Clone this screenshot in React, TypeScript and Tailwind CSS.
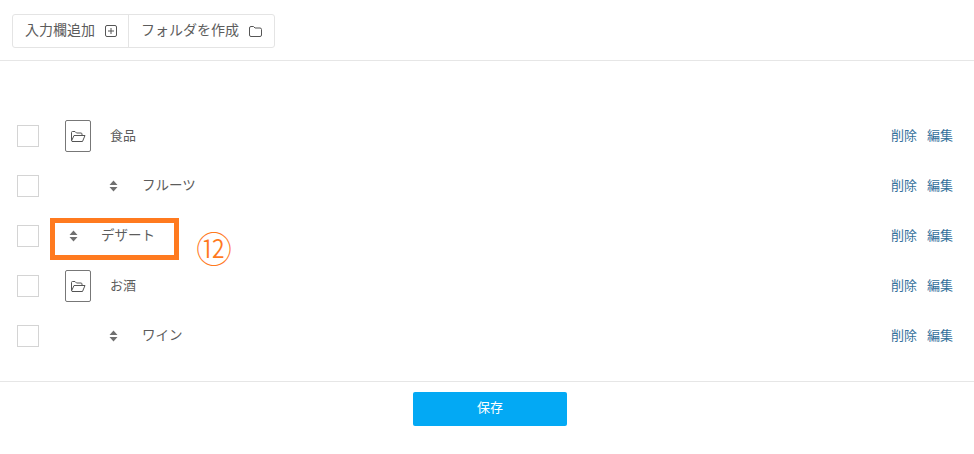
function Sort() {
  return (
    <svg width="9" height="12" viewBox="0 0 9 12" className="shrink-0">
      <path d="M4.5 0.5 L8.5 5 H0.5 Z M4.5 11.5 L8.5 7 H0.5 Z" fill="#707070" />
    </svg>
  );
}

function PlusBox() {
  return (
    <svg width="12" height="12" viewBox="0 0 12 12" fill="none" stroke="#555555" strokeWidth="1" className="shrink-0">
      <rect x="0.5" y="0.5" width="11" height="11" rx="1.5" />
      <path d="M6 3v6M3 6h6" />
    </svg>
  );
}

function Folder() {
  return (
    <svg width="13" height="11" viewBox="0 0 13 11" fill="none" stroke="#555555" strokeWidth="1" className="shrink-0">
      <path d="M0.5 2 Q0.5 0.5 2 0.5 H4.5 L6 2 H11 Q12.5 2 12.5 3.5 V9 Q12.5 10.5 11 10.5 H2 Q0.5 10.5 0.5 9 Z" />
    </svg>
  );
}

function FolderOpen() {
  return (
    <svg width="15" height="11" viewBox="0 0 15 11" fill="none" stroke="#555555" strokeWidth="1">
      <path d="M0.5 9.5 V1.5 Q0.5 0.5 1.5 0.5 H4 L5.5 2 H10 Q11 2 11 3 V4.5" />
      <path d="M0.5 10 L3 4.5 H14 L11.5 10.5 H1 Z" strokeLinejoin="round" />
    </svg>
  );
}

function Row({ children }: { children: React.ReactNode }) {
  return (
    <div className="flex h-[50px] items-center pl-[17px] pr-[21px]">
      <div className="h-[22px] w-[22px] shrink-0 border border-[#d4d4d4] bg-white" />
      <div className="flex flex-1 items-center text-[#5c5c5c]">{children}</div>
      <div className="flex gap-[10px] pb-[3px] text-[13px] text-[#33709b]">
        <span>削除</span>
        <span>編集</span>
      </div>
    </div>
  );
}

function FolderRow({ label }: { label: string }) {
  return (
    <Row>
      <div className="ml-[26px] flex h-[32px] w-[26px] items-center justify-center rounded-[2px] border border-[#777777]">
        <FolderOpen />
      </div>
      <span className="ml-[19px] pb-[3px] text-[13px]">{label}</span>
    </Row>
  );
}

function ChildRow({ label, indent }: { label: string; indent: "deep" | "shallow" }) {
  return (
    <Row>
      <div className={indent === "deep" ? "ml-[70px] flex items-center" : "ml-[30px] flex items-center"}>
        <Sort />
      </div>
      <span className={indent === "deep" ? "ml-[24px] pb-[3px] text-[13.5px]" : "ml-[23px] pb-[4px] text-[13.5px]"}>{label}</span>
    </Row>
  );
}

export default function App() {
  return (
    <div
      className="relative h-[454px] w-[974px] overflow-hidden bg-white"
      style={{ fontFamily: '"Noto Sans CJK JP", "Noto Sans", sans-serif' }}
    >
      <div className="h-[61px] border-b border-[#e6e6e6] pl-[12px] pt-[14px]">
        <div className="inline-flex h-[34px] items-center rounded-[3px] border border-[#e4e4e4] text-[14px] text-[#5c5c5c]">
          <div className="flex h-full items-center gap-[10px] border-r border-[#e4e4e4] pl-[12px] pr-[11px]">
            <span className="pb-[3px]">入力欄追加</span>
            <PlusBox />
          </div>
          <div className="flex h-full items-center gap-[10px] pl-[12px] pr-[12px]">
            <span className="pb-[3px]">フォルダを作成</span>
            <Folder />
          </div>
        </div>
      </div>

      <div className="pt-[50px]">
        <FolderRow label="食品" />
        <ChildRow label="フルーツ" indent="deep" />
        <ChildRow label="デザート" indent="shallow" />
        <FolderRow label="お酒" />
        <ChildRow label="ワイン" indent="deep" />
      </div>

      <div className="mt-[20px] flex justify-center border-t border-[#e6e6e6] pl-[6px] pt-[10px]">
        <button className="h-[34px] w-[154px] rounded-[2px] bg-[#03a9f4] pb-[5px] text-[13px] text-white">保存</button>
      </div>

      <div className="absolute left-[50px] top-[218px] h-[42px] w-[129px] border-[5px] border-[#ff7a1f]" />
      <div className="absolute left-[196px] top-[224px] text-[36px] font-light leading-[46px] text-[#ff7a1f]">⑫</div>
    </div>
  );
}
